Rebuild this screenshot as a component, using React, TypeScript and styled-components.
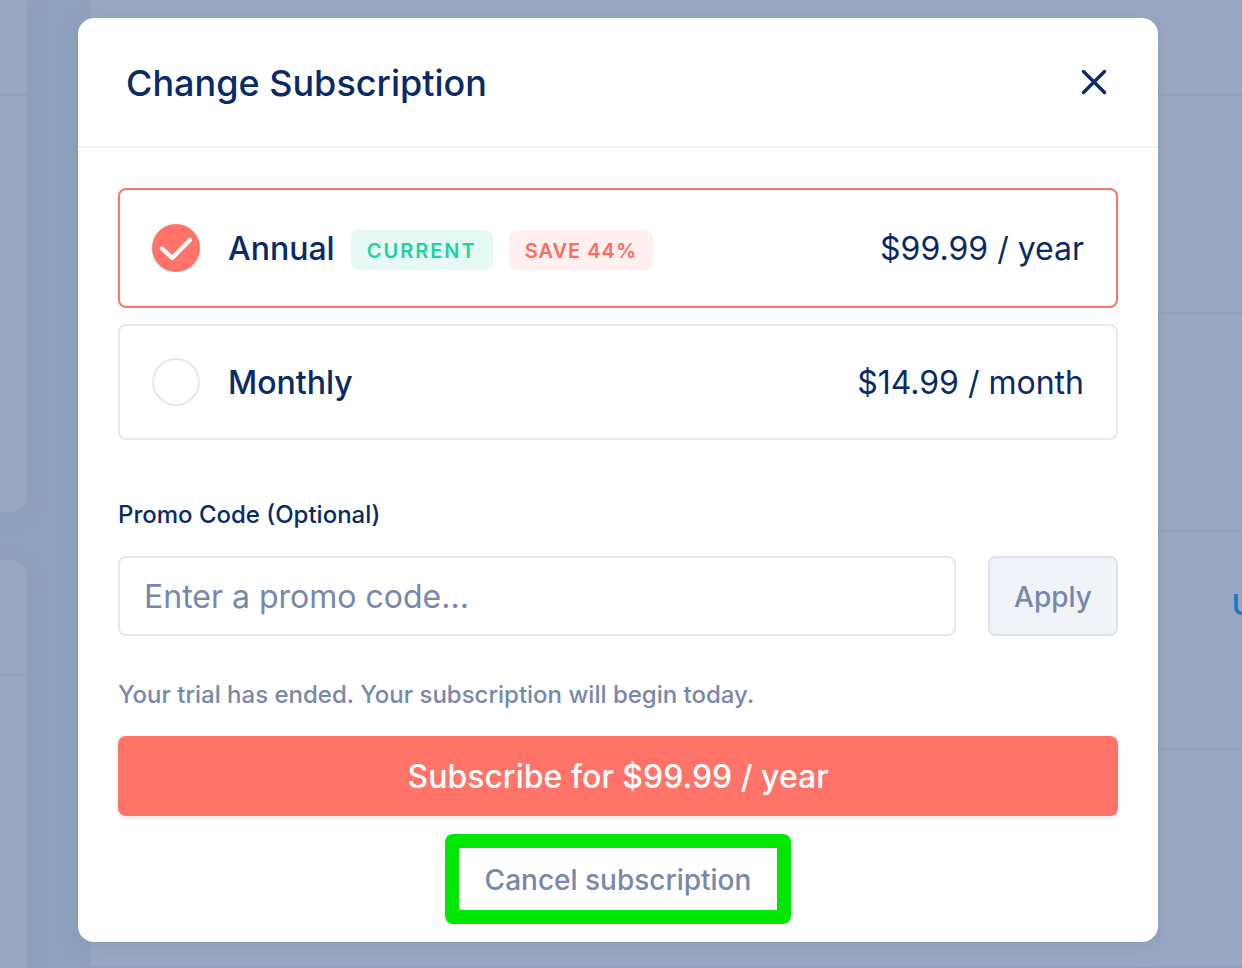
import React, { useState } from "react";
import styled, { createGlobalStyle } from "styled-components";

const navy = "#082a66";
const slate = "#7888a8";
const coral = "#ff7369";
const line = "#e3e8ef";

const GlobalStyle = createGlobalStyle`
  *, *::before, *::after { box-sizing: border-box; }
  body {
    margin: 0;
    background: #90a1be;
    color: ${navy};
    font-family: Inter, "Liberation Sans", sans-serif;
    font-weight: 500;
  }
  button, input { font: inherit; }
`;

const Screen = styled.div`
  display: grid;
  grid-template: minmax(100vh, auto) / minmax(0, 1fr);
`;

/* Dimmed account page */
const Backdrop = styled.div`
  grid-area: 1 / 1;
  display: flex;
  gap: 64px;
  overflow: hidden;
`;

const Side = styled.aside`
  flex: 0 0 27px;
  display: flex;
  flex-direction: column;
  gap: 48px;
`;

const SideCard = styled.section<{ $first?: boolean }>`
  flex: ${(p) => (p.$first ? "0 0 512px" : "1")};
  border-radius: ${(p) => (p.$first ? "0 0 16px 0" : "0 16px 0 0")};
  background: #99a8c2;
  box-shadow: 0 4px 16px rgba(120, 148, 178, 0.22);
`;

const SideHead = styled.div<{ $tall?: boolean }>`
  height: ${(p) => (p.$tall ? 116 : 96)}px;
  border-bottom: 2px solid #90a1bf;
`;

const Details = styled.main`
  flex: 1;
  min-width: 0;
  background: #99a8c2;
`;

const DetailRow = styled.div<{ $short?: boolean }>`
  display: flex;
  justify-content: flex-end;
  height: ${(p) => (p.$short ? 96 : 218)}px;
  padding-top: 56px;
  border-bottom: 2px solid #90a1bf;
`;

const RowLink = styled.a`
  flex: 0 0 10px;
  overflow: hidden;
  color: #1c78c0;
  font-size: 28px;
  line-height: 34px;
  font-weight: 600;
  text-decoration: none;
`;

/* Dialog */
const Dialog = styled.div`
  grid-area: 1 / 1;
  align-self: start;
  z-index: 1;
  margin: 18px 84px 26px 78px;
  border-radius: 16px;
  background: #fff;
  box-shadow: 0 4px 16px rgba(110, 140, 178, 0.4);
`;

const DialogHead = styled.header`
  display: flex;
  align-items: center;
  justify-content: space-between;
  height: 130px;
  padding: 0 48px;
  border-bottom: 2px solid #eff2f7;
`;

const Title = styled.h1`
  margin: 0;
  padding-top: 2px;
  font-size: 36px;
  line-height: 44px;
  font-weight: 500;
`;

const CloseButton = styled.button`
  display: flex;
  padding: 0;
  border: 0;
  background: none;
  color: ${navy};
`;

const DialogBody = styled.form`
  display: flex;
  flex-direction: column;
  padding: 40px 40px 18px;
`;

const Options = styled.div`
  display: flex;
  flex-direction: column;
  gap: 16px;
`;

const Option = styled.label<{ $selected: boolean }>`
  display: flex;
  align-items: center;
  min-height: ${(p) => (p.$selected ? 120 : 116)}px;
  padding: 0 32px;
  border: 2px solid ${(p) => (p.$selected ? coral : line)};
  border-radius: 8px;
`;

const RadioMark = styled.span`
  display: grid;
  margin-right: 28px;

  > * { grid-area: 1 / 1; }
`;

const Radio = styled.input`
  appearance: none;
  width: 48px;
  height: 48px;
  margin: 0;
  border: 2px solid ${line};
  border-radius: 50%;

  &:checked {
    border-color: ${coral};
    background: ${coral};
  }
`;

const OptionName = styled.span`
  margin-right: 16px;
  padding-top: 2px;
  font-size: 32px;
  line-height: 40px;
`;

const Badge = styled.span<{ $tone: "green" | "red" }>`
  height: 40px;
  margin: 4px 16px 0 0;
  padding: 0 16px;
  border-radius: 8px;
  background: ${(p) => (p.$tone === "green" ? "#e6f9f5" : "#fff0ef")};
  color: ${(p) => (p.$tone === "green" ? "#1dd1a1" : "#ff6b60")};
  font-size: 20px;
  line-height: 42px;
  font-weight: 600;
  letter-spacing: ${(p) => (p.$tone === "green" ? 2 : 1)}px;
`;

const Price = styled.span`
  margin-left: auto;
  padding-top: 2px;
  font-size: 32px;
  line-height: 40px;
  font-weight: 400;
`;

const PromoLabel = styled.label`
  margin: 60px 0 26px;
  font-size: 24px;
  line-height: 30px;
`;

const PromoRow = styled.div`
  display: flex;
  gap: 32px;
`;

const PromoInput = styled.input`
  flex: 1;
  min-width: 0;
  height: 80px;
  padding: 0 24px;
  border: 2px solid ${line};
  border-radius: 8px;
  background: #fff;
  color: ${navy};
  font-size: 32px;
  font-weight: 400;

  &::placeholder {
    color: ${slate};
    opacity: 1;
  }
`;

const ApplyButton = styled.button`
  flex: 0 0 130px;
  padding: 2px 0 0;
  border: 2px solid #dbe2ec;
  border-radius: 8px;
  background: #f0f3f8;
  color: ${slate};
  font-size: 28px;
`;

const Notice = styled.p`
  margin: 44px 0 26px;
  color: ${slate};
  font-size: 24px;
  line-height: 30px;
`;

const SubscribeButton = styled.button`
  height: 80px;
  border: 0;
  border-radius: 8px;
  background: ${coral};
  box-shadow: 0 2px 4px rgba(8, 42, 102, 0.12);
  color: #fff;
  font-size: 32px;
`;

const CancelFrame = styled.div`
  align-self: center;
  display: flex;
  margin-top: 18px;
  border-radius: 8px;
  background: #00e800;
  padding: 14px;
`;

const CancelButton = styled.button`
  height: 62px;
  padding: 2px 26px 0;
  border: 0;
  background: #fff;
  color: ${slate};
  font-size: 28px;
`;

export default function App() {
  const [plan, setPlan] = useState("annual");
  const [code, setCode] = useState("");

  const radio = (value: string) => (
    <RadioMark>
      <Radio
        type="radio"
        name="plan"
        value={value}
        checked={plan === value}
        onChange={() => setPlan(value)}
      />
      {plan === value && (
        <svg width="48" height="48" viewBox="0 0 48 48" fill="none" aria-hidden="true">
          <path
            d="M10 24.5 20.3 34 38 16"
            stroke="#fff"
            strokeWidth="4.2"
            strokeLinecap="round"
            strokeLinejoin="round"
          />
        </svg>
      )}
    </RadioMark>
  );

  return (
    <>
      <GlobalStyle />
      <Screen>
        <Backdrop>
          <Side>
            <SideCard $first>
              <SideHead />
            </SideCard>
            <SideCard>
              <SideHead $tall />
            </SideCard>
          </Side>
          <Details>
            <DetailRow $short />
            <DetailRow />
            <DetailRow />
            <DetailRow>
              <RowLink href="#">U</RowLink>
            </DetailRow>
            <DetailRow />
          </Details>
        </Backdrop>

        <Dialog role="dialog" aria-labelledby="dialog-title">
          <DialogHead>
            <Title id="dialog-title">Change Subscription</Title>
            <CloseButton type="button" aria-label="Close">
              <svg width="32" height="32" viewBox="0 0 32 32" fill="none" aria-hidden="true">
                <path
                  d="M5.5 5.5 26.5 26.5M26.5 5.5 5.5 26.5"
                  stroke="currentColor"
                  strokeWidth="3.4"
                  strokeLinecap="round"
                />
              </svg>
            </CloseButton>
          </DialogHead>

          <DialogBody onSubmit={(e) => e.preventDefault()}>
            <Options role="radiogroup" aria-labelledby="dialog-title">
              <Option $selected={plan === "annual"}>
                {radio("annual")}
                <OptionName>Annual</OptionName>
                <Badge $tone="green">CURRENT</Badge>
                <Badge $tone="red">SAVE 44%</Badge>
                <Price>$99.99 / year</Price>
              </Option>
              <Option $selected={plan === "monthly"}>
                {radio("monthly")}
                <OptionName>Monthly</OptionName>
                <Price>$14.99 / month</Price>
              </Option>
            </Options>

            <PromoLabel htmlFor="promo">Promo Code (Optional)</PromoLabel>
            <PromoRow>
              <PromoInput
                id="promo"
                type="text"
                placeholder="Enter a promo code..."
                value={code}
                onChange={(e) => setCode(e.target.value)}
              />
              <ApplyButton type="button">Apply</ApplyButton>
            </PromoRow>

            <Notice>Your trial has ended. Your subscription will begin today.</Notice>
            <SubscribeButton type="submit">
              Subscribe for {plan === "annual" ? "$99.99 / year" : "$14.99 / month"}
            </SubscribeButton>
            <CancelFrame>
              <CancelButton type="button">Cancel subscription</CancelButton>
            </CancelFrame>
          </DialogBody>
        </Dialog>
      </Screen>
    </>
  );
}
